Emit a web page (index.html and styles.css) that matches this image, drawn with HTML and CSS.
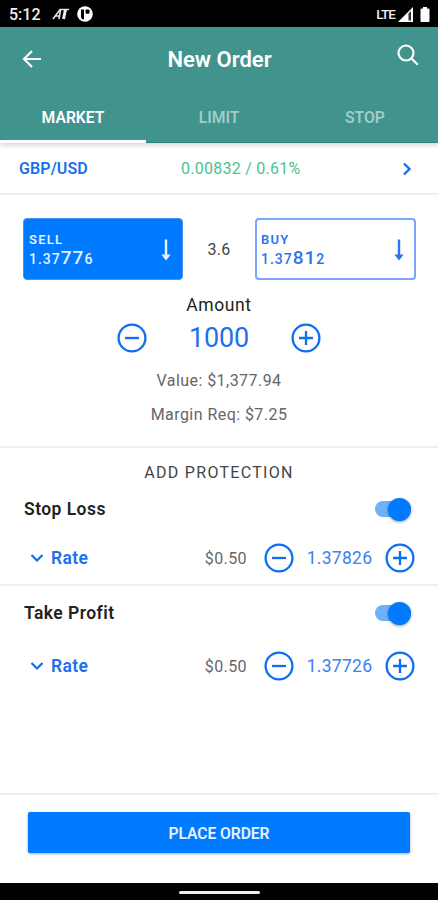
FILE: index.html
```
<!DOCTYPE html>
<html lang="en">
<head>
    <meta charset="UTF-8">
    <meta name="viewport" content="width=device-width, initial-scale=1.0">
    <title>New Order</title>
    <link rel="stylesheet" href="styles.css">
</head>
<body>
<svg width="0" height="0" class="defs">
    <symbol id="minus" viewBox="0 0 30 30">
        <circle cx="15" cy="15" r="13.4"/>
        <path d="M8 15h14"/>
    </symbol>
    <symbol id="plus" viewBox="0 0 30 30">
        <circle cx="15" cy="15" r="13.4"/>
        <path d="M8 15h14M15 8v14"/>
    </symbol>
    <symbol id="chevron" viewBox="0 0 14 10">
        <path d="M1.5 2L7 7.5L12.500 2"/>
    </symbol>
    <symbol id="arrow" viewBox="0 0 10 22">
        <path d="M5 0.500V17" fill="none" stroke="currentColor" stroke-width="2.400"/>
        <path d="M0.300 15.500h9.400L5 21.500z" fill="currentColor"/>
    </symbol>
</svg>

<div class="status">
    <span class="clock">5:12</span>
    <svg class="status-at" width="18" height="12" viewBox="0 0 18 12">
        <path d="M1 11L8 1.500H17M8.500 2L7 11M3.500 8H8" fill="none" stroke="#ddd" stroke-width="1.700"/>
        <path d="M13.500 1.500L11.500 11" fill="none" stroke="#eee" stroke-width="3"/>
    </svg>
    <svg class="status-p" width="16" height="16" viewBox="0 0 16 16">
        <circle cx="8" cy="8" r="7.800" fill="#fff"/>
        <path d="M4 3.500V10.500Q4 13.500 7 13.500V3.500z" fill="#000"/>
        <rect x="8.500" y="3.500" width="4" height="4.200" rx="1" fill="#000"/>
    </svg>
    <span class="lte">LTE</span>
    <svg class="signal" width="15" height="15" viewBox="0 0 15 15">
        <path d="M0 15L15 0V15z" fill="#fff"/>
        <path d="M10.500 6.500L13 4V13.500H10.500z" fill="#333"/>
    </svg>
    <svg class="battery" width="10" height="15" viewBox="0 0 10 15">
        <path d="M3 0h4v1.500h1.500a1 1 0 0 1 1 1V14a1 1 0 0 1-1 1h-7a1 1 0 0 1-1-1V2.500a1 1 0 0 1 1-1H3z" fill="#fff"/>
    </svg>
</div>

<div class="header">
    <div class="title">
        <svg class="back" width="20" height="20" viewBox="0 0 20 20">
            <path d="M19 10H2.500M10 2L2 10L10 18"/>
        </svg>
        <h1>New Order</h1>
        <svg class="search" width="22" height="22" viewBox="0 0 22 22">
            <circle cx="9" cy="9" r="7.500"/>
            <path d="M14.300 14.300L20.800 20.800"/>
        </svg>
    </div>
    <div class="tabs">
        <a class="tab active">MARKET</a>
        <a class="tab">LIMIT</a>
        <a class="tab">STOP</a>
    </div>
</div>

<div class="pair">
    <span class="pair-name">GBP/USD</span>
    <span class="change">0.00832 / 0.61%</span>
    <svg class="next" width="10" height="14" viewBox="0 0 10 14">
        <path d="M2 1.500L7.500 7L2 12.500"/>
    </svg>
</div>

<div class="order">
    <div class="prices">
        <div class="card sell">
            <div>
                <div class="side">SELL</div>
                <div class="price">1.37<b>77</b>6</div>
            </div>
            <svg width="10" height="22"><use href="#arrow"/></svg>
        </div>
        <span class="spread">3.6</span>
        <div class="card buy">
            <div>
                <div class="side">BUY</div>
                <div class="price">1.37<b>81</b>2</div>
            </div>
            <svg width="10" height="22"><use href="#arrow"/></svg>
        </div>
    </div>
    <div class="label">Amount</div>
    <div class="amount">
        <svg class="round" width="30" height="30"><use href="#minus"/></svg>
        <span class="amount-value">1000</span>
        <svg class="round" width="30" height="30"><use href="#plus"/></svg>
    </div>
    <div class="info">Value: $1,377.94</div>
    <div class="info">Margin Req: $7.25</div>
</div>

<div class="protection">
    <h2>ADD PROTECTION</h2>
    <div class="rule stop-loss">
        <div class="rule-head">
            <h3>Stop Loss</h3>
            <span class="switch"></span>
        </div>
        <div class="rule-row">
            <svg class="down" width="14" height="10"><use href="#chevron"/></svg>
            <span class="rate">Rate</span>
            <span class="cost">$0.50</span>
            <svg class="round" width="30" height="30"><use href="#minus"/></svg>
            <span class="rate-value">1.37826</span>
            <svg class="round" width="30" height="30"><use href="#plus"/></svg>
        </div>
    </div>
    <div class="rule take-profit">
        <div class="rule-head">
            <h3>Take Profit</h3>
            <span class="switch"></span>
        </div>
        <div class="rule-row">
            <svg class="down" width="14" height="10"><use href="#chevron"/></svg>
            <span class="rate">Rate</span>
            <span class="cost">$0.50</span>
            <svg class="round" width="30" height="30"><use href="#minus"/></svg>
            <span class="rate-value">1.37726</span>
            <svg class="round" width="30" height="30"><use href="#plus"/></svg>
        </div>
    </div>
</div>

<div class="footer">
    <button class="place">PLACE ORDER</button>
</div>
<div class="navbar"><span></span></div>
</body>
</html>
```
FILE: styles.css
```
*{
    padding: 0;
    margin: 0;
    box-sizing: border-box;
}
body{
    width: 438px;
    height: 900px;
    display: flex;
    flex-direction: column;
    overflow: hidden;
    background: #fff;
    color: #222;
    font-family: Roboto, "Liberation Sans", sans-serif;
}
svg{
    display: block;
    flex: none;
}
.defs{
    position: absolute;
}

/* status bar */
.status{
    height: 27px;
    flex: none;
    display: flex;
    align-items: center;
    padding: 1px 8px 0 9px;
    background: #000;
    color: #eee;
}
.clock{
    width: 43px;
    font-size: 16px;
    font-weight: 500;
}
.status-p{
    margin-left: 7px;
}
.lte{
    margin-left: auto;
    font-size: 13.5px;
    font-weight: 500;
    letter-spacing: -0.9px;
}
.signal{
    margin-left: 3px;
}
.battery{
    margin-left: 7px;
}

/* header */
.header{
    height: 116px;
    flex: none;
    background: #41938e;
    color: #fff;
    box-shadow: 0 2px 5px rgba(0,0,0,.18);
    z-index: 1;
}
.title{
    height: 65px;
    display: flex;
    align-items: center;
    justify-content: space-between;
    padding: 0 19px 0 22px;
}
.title h1{
    font-size: 22px;
    font-weight: 600;
    letter-spacing: 0;
}
.back, .search{
    fill: none;
    stroke: #fff;
    stroke-width: 2.2;
}
.back{
    margin-bottom: 2px;
}
.search{
    margin-bottom: 9px;
}
.tabs{
    height: 51px;
    display: flex;
}
.tab{
    flex: 1;
    height: 51px;
    line-height: 51px;
    text-align: center;
    font-size: 15.7px;
    font-weight: 600;
    color: #a0cdc9;
    border-bottom: 1px solid #30807c;
}
.tab.active{
    color: #fff;
    border-bottom: 3px solid #fff;
}

/* currency pair */
.pair{
    height: 52px;
    flex: none;
    display: flex;
    align-items: center;
    padding: 1px 26px 0 19px;
    border-bottom: 2px solid #efefef;
    font-size: 16px;
}
.pair-name{
    width: 162px;
    font-weight: 600;
    letter-spacing: 0.1px;
    color: #1a6ff0;
}
.change{
    letter-spacing: 0.25px;
    color: #4bc48c;
}
.next{
    margin-left: auto;
    fill: none;
    stroke: #1a6ff0;
    stroke-width: 2.4;
}

/* order */
.order{
    height: 253px;
    flex: none;
    padding-top: 23px;
    border-bottom: 2px solid #efefef;
    text-align: center;
}
.prices{
    display: flex;
    align-items: center;
    justify-content: space-between;
    padding: 0 22px 0 23px;
}
.card{
    width: 160px;
    height: 62px;
    display: flex;
    align-items: center;
    justify-content: space-between;
    padding: 1px 11px 0 5px;
    border-radius: 4px;
    text-align: left;
}
.sell{
    background: #007aff;
    color: #e4f0ff;
    border: 1px solid #4a92f5;
}
.buy{
    width: 161px;
    border: 2px solid #7aa5f8;
    color: #2b74ee;
    padding: 1px 10px 0 4px;
}
.side{
    font-size: 13px;
    line-height: 16px;
    font-weight: 600;
    letter-spacing: 1.2px;
}
.price{
    height: 20px;
    line-height: 20px;
    font-size: 14px;
    font-weight: 500;
    letter-spacing: 1px;
}
.price b{
    font-size: 19px;
    font-weight: 500;
}
.spread{
    font-size: 16px;
    letter-spacing: 0.3px;
    color: #444;
}
.label{
    margin-top: 15px;
    height: 20px;
    line-height: 21px;
    font-size: 17.5px;
    letter-spacing: 0.6px;
}
.amount{
    display: flex;
    align-items: center;
    justify-content: space-between;
    width: 204px;
    height: 46px;
    margin: 0 auto 2px;
}
.amount-value{
    font-size: 27px;
    letter-spacing: -0.2px;
    color: #1f70f0;
}
.round{
    fill: none;
    stroke: #0f6df2;
    stroke-width: 2.3;
}
.info{
    height: 34px;
    line-height: 35px;
    font-size: 16px;
    letter-spacing: 0.45px;
    color: #666;
}

/* protection */
.protection{
    flex: 1;
}
.protection h2{
    height: 43px;
    padding-top: 1px;
    line-height: 47px;
    text-align: center;
    font-size: 16px;
    font-weight: 400;
    letter-spacing: 1.3px;
    color: #444;
}
.rule-head{
    display: flex;
    align-items: center;
    justify-content: space-between;
    height: 36px;
    padding: 0 27px 0 24px;
}
.rule-head h3{
    font-size: 17.5px;
    font-weight: 600;
    letter-spacing: 0.45px;
}
.switch{
    width: 36px;
    height: 16px;
    display: flex;
    align-items: center;
    justify-content: flex-end;
    border-radius: 8px;
    background: #6fb0fa;
}
.switch::after{
    content: "";
    width: 23px;
    height: 23px;
    border-radius: 50%;
    background: #007aff;
    box-shadow: 0 1px 3px rgba(0,0,0,.4);
}
.rule-row{
    display: flex;
    align-items: center;
    padding: 0 23px 0 30px;
    height: 62px;
}
.stop-loss{
    height: 95px;
    border-bottom: 2px solid #efefef;
}
.take-profit{
    padding-top: 9px;
}
.take-profit .rule-row{
    height: 70px;
}
.down{
    fill: none;
    stroke: #0f6df2;
    stroke-width: 2.2;
}
.rate{
    margin-left: 7px;
    font-size: 17.5px;
    font-weight: 600;
    letter-spacing: 0.4px;
    color: #1a6ff0;
}
.cost{
    margin-left: auto;
    margin-right: 17px;
    font-size: 16px;
    letter-spacing: 0.4px;
    color: #666;
}
.rate-value{
    width: 91px;
    text-align: center;
    font-size: 17.5px;
    letter-spacing: 0.3px;
    color: #3d80f2;
}

/* bottom */
.footer{
    height: 90px;
    flex: none;
    padding: 17px 28px 0;
    border-top: 2px solid #efefef;
}
.place{
    display: block;
    width: 382px;
    height: 41px;
    padding-top: 2px;
    border: none;
    border-radius: 2px;
    background: #007aff;
    box-shadow: 0 1px 3px rgba(0,0,0,.35);
    font-family: inherit;
    font-size: 15.7px;
    font-weight: 600;
    letter-spacing: -0.1px;
    color: #e8f2ff;
}
.navbar{
    height: 17px;
    flex: none;
    display: flex;
    justify-content: center;
    padding-top: 8px;
    background: #000;
}
.navbar span{
    width: 81px;
    height: 3px;
    border-radius: 2px;
    background: #eee;
}
```
